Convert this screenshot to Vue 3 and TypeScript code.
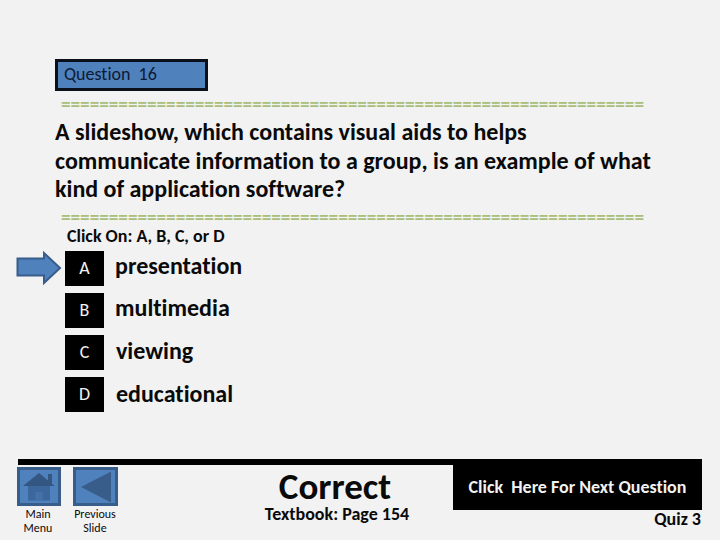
<script setup lang="ts">
const rule = '='.repeat(61)
const options = [
  { key: 'A', text: 'presentation', cls: 'a' },
  { key: 'B', text: 'multimedia', cls: 'b' },
  { key: 'C', text: 'viewing', cls: 'c' },
  { key: 'D', text: 'educational', cls: 'd' },
]
</script>

<template>
  <div class="slide">
    <div class="head">
      <div class="qbox">Question&nbsp; 16</div>
      <div class="rule first">{{ rule }}</div>
      <h1 class="question">A slideshow, which contains visual aids to helps<br />communicate information to a group, is an example of what<br />kind of application software?</h1>
      <div class="rule second">{{ rule }}</div>
      <div class="hint">Click On: A, B, C, or D</div>
    </div>

    <div class="options">
      <div v-for="(o, i) in options" :key="o.key" class="option">
        <svg v-if="i === 0" class="arrow" width="46" height="34" viewBox="0 0 46 34">
          <path d="M1.500 7.500H28V2l16 15-16 15v-7.500H1.500z" fill="#4f81bd" stroke="#385d8a" stroke-width="2" />
        </svg>
        <div class="key">{{ o.key }}</div>
        <div class="answer" :class="o.cls">{{ o.text }}</div>
      </div>
    </div>

    <div class="footer">
      <div class="nav">
        <div class="nav-item main">
          <svg class="btn" width="44" height="39" viewBox="0 0 44 39">
            <rect x="1.500" y="1.500" width="41" height="36" fill="#4f81bd" stroke="#385d8a" stroke-width="3" />
            <path d="M11 19h22v14.500H11z" fill="#3c679c" />
            <path d="M6 19 22 6l9 7.500V7h4v10l3 2z" fill="#345682" />
            <rect x="18.500" y="25" width="7" height="8.500" fill="#4671a8" />
          </svg>
          <div class="nav-label">Main<br />Menu</div>
        </div>
        <div class="nav-item prev">
          <svg class="btn" width="45" height="39" viewBox="0 0 45 39">
            <rect x="1.500" y="1.500" width="42" height="36" fill="#4f81bd" stroke="#385d8a" stroke-width="3" />
            <path d="M8 20 38 4.500v31z" fill="#385d8a" />
          </svg>
          <div class="nav-label">Previous<br />Slide</div>
        </div>
      </div>
      <div class="main-col">
        <div class="bar"></div>
        <div class="result">
          <div class="correct">Correct</div>
          <div class="page">Textbook: Page 154</div>
        </div>
      </div>
      <div class="right-col">
        <div class="next">Click&nbsp; Here For Next Question</div>
        <div class="quiz">Quiz 3</div>
      </div>
    </div>
  </div>
</template>

<style>
html, body { margin: 0; background: #f2f2f2; }
</style>

<style scoped>
.slide {
  width: 720px;
  height: 540px;
  box-sizing: border-box;
  background: #f2f2f2;
  padding-top: 59px;
  font-family: Carlito, Lato, "Open Sans", sans-serif;
  font-variant-ligatures: none;
  color: #0a0a0a;
  overflow: hidden;
  display: flex;
  flex-direction: column;
}
.head { padding-left: 55px; }
.qbox {
  width: 153px;
  height: 32px;
  box-sizing: border-box;
  background: #4f81bd;
  border: 3px solid #0a0f1a;
  padding-left: 6px;
  font-size: 18px;
  line-height: 24px;
  color: #0d1a33;
}
.rule {
  margin-left: 6px;
  white-space: nowrap;
  color: #a9bf7a;
  font-weight: 700;
  font-size: 19.200px;
  line-height: 20px;
  height: 20px;
}
.rule.first { margin-top: 4px; }
.question {
  margin: 0;
  font-size: 24px;
  font-weight: 700;
  line-height: 28.500px;
  height: 86px;
  white-space: nowrap;
  padding-top: 3px;
}
.rule.second { margin-top: 4px; }
.hint {
  margin-left: 12px;
  font-size: 18px;
  font-weight: 700;
  line-height: 18px;
  margin-top: -1px;
}
.options {
  margin-top: 6px;
  padding-left: 65px;
  display: flex;
  flex-direction: column;
  gap: 7px;
}
.option {
  position: relative;
  display: flex;
  align-items: center;
  height: 35px;
}
.arrow { position: absolute; left: -49px; top: 0; }
.key {
  width: 39px;
  height: 35px;
  background: #000;
  color: #f2f2f2;
  font-size: 18px;
  line-height: 35px;
  text-align: center;
}
.answer {
  margin-left: 11px;
  font-size: 24px;
  font-weight: 700;
  line-height: 28px;
  margin-top: -6px;
}
.answer.c, .answer.d { margin-left: 12px; }
.answer.c { margin-top: -4px; }
.answer.d { margin-top: -2px; }
.footer {
  margin-top: 47px;
  padding-left: 18px;
  display: flex;
  align-items: flex-start;
}
.nav { display: flex; width: 0; position: relative; }
.nav-item {
  position: absolute;
  top: 8px;
  display: flex;
  flex-direction: column;
  align-items: center;
  width: 60px;
}
.nav-item.main { left: -9px; }
.nav-item.prev { left: 48px; width: 58px; }
.nav-label {
  font-size: 12px;
  line-height: 14px;
  text-align: center;
  margin-top: 1px;
}
.nav-item.main .nav-label { margin-right: 2px; }
.main-col { width: 435px; }
.bar { height: 6px; background: #000; }
.result {
  padding-left: 197px;
  width: 240px;
  display: flex;
  flex-direction: column;
  align-items: center;
}
.correct {
  font-size: 37px;
  font-weight: 700;
  line-height: 38px;
  margin-top: 3px;
}
.page {
  font-size: 18px;
  font-weight: 700;
  line-height: 16px;
  margin-left: 4px;
}
.right-col { width: 249px; }
.next {
  height: 51px;
  background: #000;
  color: #f2f2f2;
  font-size: 18px;
  font-weight: 700;
  line-height: 57px;
  text-align: center;
}
.quiz {
  text-align: right;
  font-size: 18px;
  font-weight: 700;
  line-height: 18px;
  padding-right: 1px;
}
</style>
